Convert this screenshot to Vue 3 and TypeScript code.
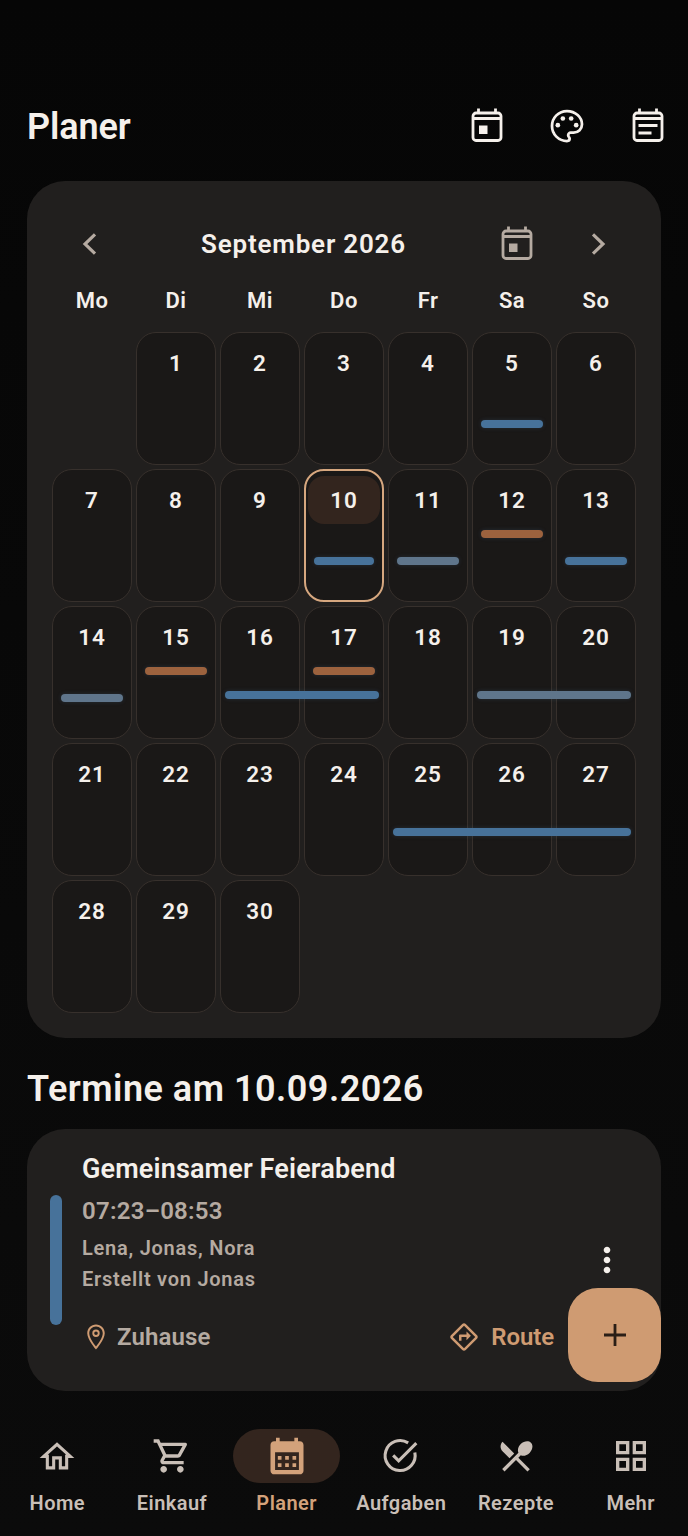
<script setup lang="ts">
const weekdays = ['Mo', 'Di', 'Mi', 'Do', 'Fr', 'Sa', 'So']
const days: (number | null)[] = [null, ...Array.from({ length: 30 }, (_, i) => i + 1)]

const BLUE = '#47729a'
const GREY = '#5f758b'
const BROWN = '#9c623e'
const bars = [
  { x: 429, y: 88, w: 62, c: BLUE },
  { x: 262, y: 225, w: 60, c: BLUE },
  { x: 345, y: 225, w: 62, c: GREY },
  { x: 429, y: 198, w: 62, c: BROWN },
  { x: 513, y: 225, w: 62, c: BLUE },
  { x: 9, y: 362, w: 62, c: GREY },
  { x: 93, y: 335, w: 62, c: BROWN },
  { x: 173, y: 359, w: 154, c: BLUE },
  { x: 261, y: 335, w: 62, c: BROWN },
  { x: 425, y: 359, w: 154, c: GREY },
  { x: 341, y: 496, w: 238, c: BLUE },
]
const barStyle = (b: { x: number; y: number; w: number; c: string }) => ({
  left: `${b.x}px`,
  top: `${b.y}px`,
  width: `${b.w}px`,
  background: b.c,
})

const nav = [
  { label: 'Home', kind: 'home' },
  { label: 'Einkauf', kind: 'fill', d: 'M15.55 13c.75 0 1.41-.41 1.75-1.03l3.58-6.49c.37-.66-.11-1.48-.87-1.48H5.21l-.94-2H1v2h2l3.6 7.59-1.35 2.44C4.52 15.37 5.48 17 7 17h12v-2H7l1.1-2h7.45zM6.16 6h12.15l-2.76 5H8.53L6.16 6zM7 18c-1.1 0-1.99.9-1.99 2S5.9 22 7 22s2-.9 2-2-.9-2-2-2zm10 0c-1.1 0-1.99.9-1.99 2s.89 2 1.99 2 2-.9 2-2-.9-2-2-2z' },
  { label: 'Planer', kind: 'planer', active: true },
  { label: 'Aufgaben', kind: 'tasks' },
  { label: 'Rezepte', kind: 'fill', d: 'M8.1 13.34l2.83-2.83L3.91 3.5c-1.56 1.56-1.56 4.09 0 5.66l4.19 4.18zm6.78-1.81c1.53.71 3.68.21 5.27-1.38 1.91-1.91 2.28-4.65.81-6.12-1.46-1.46-4.2-1.1-6.12.81-1.59 1.59-2.09 3.74-1.38 5.27L3.7 19.87l1.41 1.41L12 14.41l6.88 6.88 1.41-1.41L13.41 13l1.47-1.47z' },
  { label: 'Mehr', kind: 'fill', d: 'M3 3v8h8V3H3zm6 6H5V5h4v4zm-6 4v8h8v-8H3zm6 6H5v-4h4v4zm4-16v8h8V3h-8zm6 6h-4V5h4v4zm-6 4v8h8v-8h-8zm6 6h-4v-4h4v4z' },
]
</script>

<template>
  <div class="page">
    <main class="main">
      <header class="top">
        <h1 class="title">Planer</h1>
        <div class="top-actions">
          <span class="icon-btn">
            <svg viewBox="0 0 40 40" class="i40 line">
              <rect x="6" y="7" width="28" height="27.5" rx="3" /><path d="M11.5 2.5V7M28.5 2.5V7M6 12.5h28" />
              <rect class="solid" x="12" y="19.500" width="8.500" height="8.500" />
            </svg>
          </span>
          <span class="icon-btn">
            <svg viewBox="0 0 24 24" class="i40 line palette">
              <path d="M12 21C7 21 3 17 3 12S7 3 12 3s9 3.6 9 8c0 2.8-2.2 5-5 5h-1.8c-.8 0-1.5.7-1.5 1.5 0 .4.2.7.4 1 .3.4.5.8.5 1.2 0 .9-.7 1.3-1.6 1.3z" />
              <circle class="solid" cx="6.5" cy="11.5" r="1.4" /><circle class="solid" cx="9.5" cy="7.5" r="1.4" /><circle class="solid" cx="14.5" cy="7.5" r="1.4" /><circle class="solid" cx="17.5" cy="11.5" r="1.4" />
            </svg>
          </span>
          <span class="icon-btn">
            <svg viewBox="0 0 40 40" class="i40 line">
              <rect x="6" y="7" width="28" height="27.5" rx="3" /><path d="M11.5 2.5V7M28.5 2.5V7M6 12.5h28M10.5 19.500h19M10.5 27h13" />
            </svg>
          </span>
        </div>
      </header>

      <section class="calendar">
        <div class="month-row">
          <span class="month-btn"><svg viewBox="0 0 24 24" class="i40 line muted chev"><path d="M15 6.2 9 12l6 5.8" /></svg></span>
          <span class="month">September 2026</span>
          <span class="month-btn">
            <svg viewBox="0 0 40 40" class="i40 line muted">
              <rect x="6" y="7" width="28" height="27.5" rx="3" /><path d="M11.5 2.5V7M28.5 2.5V7M6 12.5h28" />
              <rect class="solid" x="12" y="19.500" width="8.500" height="8.500" />
            </svg>
          </span>
          <span class="month-btn next"><svg viewBox="0 0 24 24" class="i40 line muted chev"><path d="M9 6.2 15 12l-6 5.8" /></svg></span>
        </div>
        <div class="weekdays">
          <span v-for="w in weekdays" :key="w">{{ w }}</span>
        </div>
        <div class="grid">
          <template v-for="(d, i) in days" :key="i">
            <div v-if="d === null" class="blank"></div>
            <div v-else class="cell" :class="{ today: d === 10 }">
              <span class="num">{{ d }}</span>
            </div>
          </template>
          <span v-for="(b, i) in bars" :key="'b' + i" class="bar" :style="barStyle(b)"></span>
        </div>
      </section>

      <h2 class="heading">Termine am 10.09.2026</h2>

      <article class="event">
        <span class="stripe"></span>
        <div class="event-body">
          <div class="event-title">Gemeinsamer Feierabend</div>
          <div class="event-time">07:23–08:53</div>
          <div class="event-meta first">Lena, Jonas, Nora</div>
          <div class="event-meta">Erstellt von Jonas</div>
          <div class="event-foot">
            <span class="place">
              <svg viewBox="0 0 24 24" class="i30 accent"><path d="M12 2C8.13 2 5 5.13 5 9c0 5.25 7 13 7 13s7-7.75 7-13c0-3.87-3.13-7-7-7zM6.6 9c0-3 2.400-5.400 5.400-5.400s5.400 2.400 5.400 5.400c0 3.100-3 7.700-5.400 10.600C9.600 16.700 6.600 12.100 6.600 9z" fill-rule="evenodd" /><circle class="hole" cx="12" cy="9" r="2.200" /></svg>
              Zuhause
            </span>
            <span class="route">
              <svg viewBox="0 0 24 24" class="i30 accent"><path d="M22.43 10.59l-9.01-9.01c-.75-.75-2.07-.76-2.83 0l-9 9c-.78.78-.78 2.04 0 2.82l9 9c.39.39.9.58 1.41.58.51 0 1.02-.19 1.41-.58l8.99-8.99c.79-.76.8-2.02.03-2.82zm-10.42 10.4l-9-9 9-9 9 9-9 9zM8 11v4h2v-3h4v2.5l3.5-3.5L14 7.5V10H9c-.55 0-1 .45-1 1z" /></svg>
              Route
            </span>
          </div>
        </div>
        <span class="more"><svg viewBox="0 0 24 24" class="i40"><path d="M12 8c1.1 0 2-.9 2-2s-.9-2-2-2-2 .9-2 2 .9 2 2 2zm0 2c-1.100 0-2 .9-2 2s.9 2 2 2 2-.9 2-2-.9-2-2-2zm0 6c-1.100 0-2 .9-2 2s.9 2 2 2 2-.9 2-2-.9-2-2-2z" /></svg></span>
      </article>

      <button class="fab" type="button" aria-label="Termin hinzufügen">
        <svg viewBox="0 0 40 40" class="i40 line"><path d="M20 9v22M9 20h22" /></svg>
      </button>
    </main>

    <nav class="nav">
      <div v-for="n in nav" :key="n.label" class="nav-item" :class="{ active: n.active }">
        <span class="pill">
          <svg v-if="n.kind === 'fill'" viewBox="0 0 24 24" class="i40"><path :d="n.d" /></svg>
          <svg v-else-if="n.kind === 'home'" viewBox="0 0 24 24" class="i40 line navline"><path d="M4 12.200 12 5l8 7.200h-2.200v6.900h-3.800v-6h-4v6H6.200v-6.900z" /></svg>
          <svg v-else-if="n.kind === 'tasks'" viewBox="0 0 24 24" class="i40 line navline">
            <path d="M20.300 9.900A9 9 0 1 1 16.300 4.100" /><path d="M7.300 11.600l3.300 3.300L21.200 4.300" />
          </svg>
          <svg v-else viewBox="0 0 24 24" class="i44">
            <path fill-rule="evenodd" d="M19 4h-1V2h-2v2H8V2H6v2H5c-1.100 0-2 .9-2 2v14c0 1.100.9 2 2 2h14c1.100 0 2-.9 2-2V6c0-1.100-.9-2-2-2zM5.500 10h13v9.700h-13z" />
            <path d="M7 12h2v2H7zM11 12h2v2h-2zM15 12h2v2h-2zM7 16h2v2H7zM11 16h2v2h-2zM15 16h2v2h-2z" />
          </svg>
        </span>
        <span class="nav-label">{{ n.label }}</span>
      </div>
    </nav>
  </div>
</template>

<style>
html, body { margin: 0; background: #070707; }
</style>

<style scoped>
.page {
  width: 688px;
  height: 1536px;
  display: flex;
  flex-direction: column;
  background: linear-gradient(#060606, #0b0b0b);
  color: #f5f0eb;
  font-family: Roboto, "Noto Sans", sans-serif;
  overflow: hidden;
}
svg { display: block; fill: currentColor; }
.i44 { width: 44px; height: 44px; }
.i40 { width: 40px; height: 40px; }
.i30 { width: 30px; height: 30px; }
.line { fill: none; stroke: currentColor; stroke-width: 2.800; }
.line .solid { fill: currentColor; stroke: none; }
.palette { stroke-width: 1.650; }
.chev { stroke-width: 1.900; }
.navline { stroke-width: 1.850; }
.hole { fill: none; stroke: currentColor; stroke-width: 1.500; }
.muted { color: #b5aaa1; }
.accent { color: #cf9b72; }

.main { flex: 1; position: relative; padding-top: 86px; }
.top { height: 80px; padding-left: 27px; display: flex; align-items: center; justify-content: space-between; }
.title { margin: 2px 0 0; font-size: 36px; font-weight: 600; letter-spacing: -0.1px; }
.top-actions { display: flex; }
.icon-btn { width: 80.5px; height: 80px; display: flex; align-items: center; justify-content: center; }

.calendar {
  margin: 15px 27px 0;
  height: 857px;
  box-sizing: border-box;
  padding: 25px;
  border-radius: 38px;
  background: #211f1e;
}
.month-row { display: flex; align-items: center; height: 76px; }
.month-btn { width: 76px; height: 76px; display: flex; align-items: center; justify-content: center; flex: none; }
.month-btn.next { margin-left: 5px; }
.month { flex: 1; text-align: center; font-size: 26px; font-weight: 600; letter-spacing: 0.8px; }
.weekdays { display: grid; grid-template-columns: repeat(7, 80px); column-gap: 4px; height: 36px; margin-bottom: 14px; align-items: center; text-align: center; font-size: 22px; font-weight: 600; letter-spacing: 0.5px; }
.grid { position: relative; display: grid; grid-template-columns: repeat(7, 80px); grid-auto-rows: 133px; gap: 4px; }
.cell {
  box-sizing: border-box;
  background: #1a1817;
  border: 1px solid #37302c;
  border-radius: 20px;
  padding: 6px 3px 0;
}
.cell.today { border: 2px solid #d6a77f; padding: 5px 2px 0; }
.num {
  display: flex;
  height: 48px;
  align-items: center;
  justify-content: center;
  border-radius: 16px;
  font-size: 22.500px;
  font-weight: 600;
  letter-spacing: 1px;
  color: #f5f0eb;
}
.today .num { background: #33251e; }
.bar { position: absolute; height: 8.600px; margin-top: -0.300px; border-radius: 4.300px; box-shadow: 0 0 4px rgba(70, 110, 150, 0.25); }

.heading { margin: 29px 27px 18px; font-size: 36px; line-height: 44px; font-weight: 600; letter-spacing: 0.5px; }

.event {
  margin: 0 27px;
  height: 262px;
  box-sizing: border-box;
  border-radius: 38px;
  background: #211f1e;
  display: flex;
  align-items: center;
}
.stripe { flex: none; width: 12px; height: 130px; margin-left: 23px; border-radius: 6px; background: #47729a; }
.event-body { flex: 1; align-self: stretch; padding: 22px 33px 0 20px; }
.event-title { font-size: 27px; line-height: 36px; font-weight: 600; letter-spacing: 0.15px; }
.event-time { margin-top: 7px; font-size: 24px; line-height: 34px; font-weight: 600; letter-spacing: 0.25px; color: #b5aaa1; }
.event-meta { margin-top: 1px; font-size: 20px; line-height: 30px; font-weight: 600; letter-spacing: 0.75px; color: #b5aaa1; }
.event-meta.first { margin-top: 5px; }
.event-foot { margin-top: 23px; height: 40px; display: flex; align-items: center; justify-content: space-between; font-size: 24px; font-weight: 600; letter-spacing: 0.15px; }
.place { display: flex; align-items: center; gap: 6px; color: #b5aaa1; margin-left: -1px; }
.route { display: flex; align-items: center; gap: 12px; color: #cf9b72; letter-spacing: -0.1px; }
.more { flex: none; width: 40px; margin-right: 34px; }

.fab {
  position: absolute;
  left: 568px;
  top: 1288px;
  width: 93px;
  height: 94px;
  padding: 0;
  border: 0;
  border-radius: 30px;
  background: #cf9b72;
  color: #2a1e16;
  display: flex;
  align-items: center;
  justify-content: center;
}

.nav { height: 126px; flex: none; display: grid; grid-template-columns: repeat(6, 1fr); }
.nav-item { display: flex; flex-direction: column; align-items: center; padding-top: 19px; color: #c9bfb7; }
.pill { width: 107px; height: 54px; border-radius: 27px; display: flex; align-items: center; justify-content: center; }
.active .pill { background: #33251e; }
.active { color: #d3a27b; }
.nav-label { margin-top: 7px; font-size: 20px; line-height: 26px; font-weight: 600; letter-spacing: 0.45px; white-space: nowrap; }
</style>
